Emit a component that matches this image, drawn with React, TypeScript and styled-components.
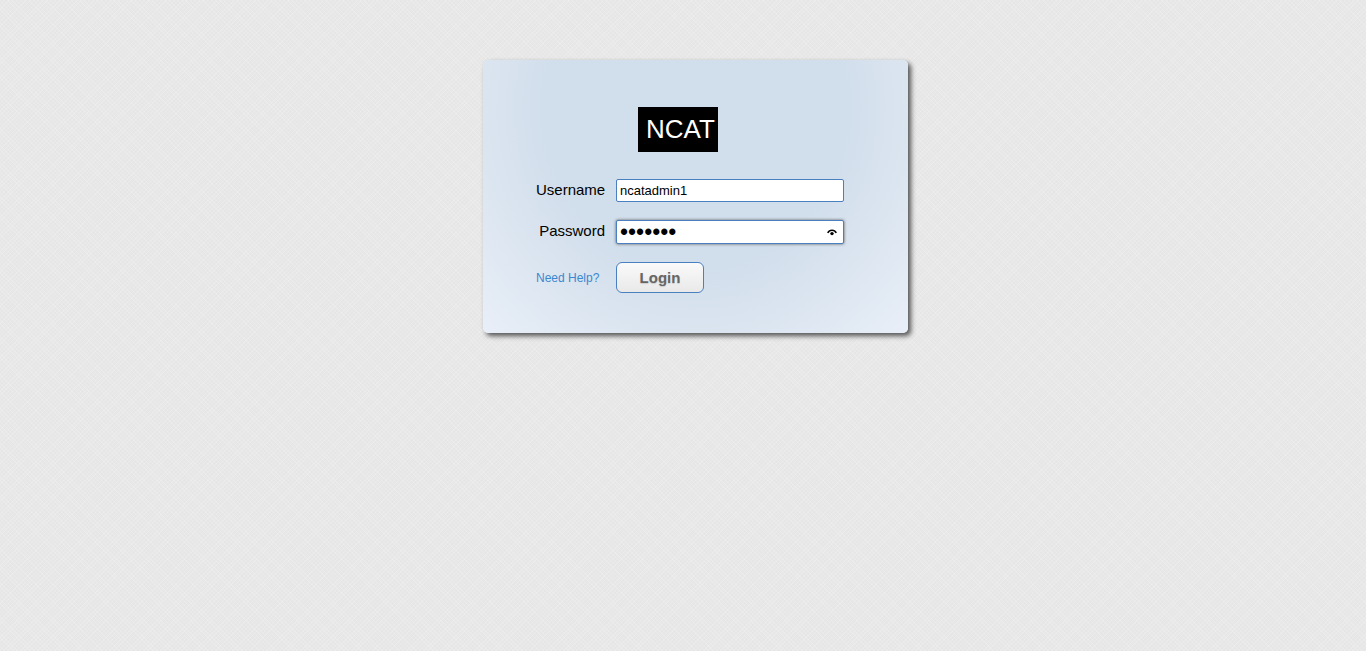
import React, { useState } from "react";
import styled, { createGlobalStyle } from "styled-components";

const GlobalStyle = createGlobalStyle`
  * { box-sizing: border-box; }
  body {
    margin: 0;
    min-height: 100vh;
    font-family: "Liberation Sans", Arial, sans-serif;
    color: #000;
    background-color: #e6e6e6;
    background-image:
      repeating-linear-gradient(45deg, rgba(255, 255, 255, 0.14) 0 1px, transparent 1px 3px),
      repeating-linear-gradient(-45deg, rgba(255, 255, 255, 0.14) 0 1px, transparent 1px 3px);
  }
`;

const Page = styled.main`
  display: flex;
  justify-content: center;
  padding: 60px 0 60px 25px;
`;

const Card = styled.form`
  width: 425px;
  max-width: 100%;
  padding: 47px 53px 40px;
  border-radius: 5px;
  background: radial-gradient(ellipse at 50% 18%, #d1deeb 50%, #e9eff8 100%);
  box-shadow: 3px 3px 5px #555;
`;

const Logo = styled.h1`
  width: 80px;
  height: 45px;
  margin: 0 0 27px 102px;
  padding-left: 8px;
  background: #000;
  color: #fff;
  font-size: 26px;
  font-weight: 400;
  line-height: 45px;
`;

const Fields = styled.div`
  display: grid;
  grid-template-columns: 69px 228px;
  column-gap: 11px;
  row-gap: 18px;
  align-items: center;
`;

const Label = styled.label`
  padding-bottom: 2px;
  font-size: 15px;
  line-height: 20px;
  text-align: right;
`;

const InputFrame = styled.div<{ $active?: boolean }>`
  display: flex;
  align-items: center;
  height: ${(p) => (p.$active ? 24 : 23)}px;
  padding: 0 4px 0 3px;
  border: 1px solid #4a80c0;
  border-radius: 2px;
  background: #fff;
  box-shadow: ${(p) => (p.$active ? "0 0 3px #555" : "none")};
`;

const TextInput = styled.input`
  flex: 1;
  min-width: 0;
  height: 20px;
  padding: 0;
  border: 0;
  outline: 0;
  background: transparent;
  color: #000;
  font-family: "Liberation Sans", Arial, sans-serif;
  font-size: 13px;
  &[type="password"] {
    font-size: 23px;
  }
`;

const RevealButton = styled.button`
  display: flex;
  width: 15px;
  height: 20px;
  padding: 0;
  border: 0;
  background: transparent;
  align-items: center;
  justify-content: center;
`;

const HelpLink = styled.a`
  color: #3c87d0;
  font-size: 12px;
  line-height: 16px;
  text-decoration: none;
`;

const LoginButton = styled.button`
  width: 88px;
  height: 31px;
  padding: 0;
  border: 1px solid #4a80c0;
  border-radius: 6px;
  background: linear-gradient(#fafafa, #e9e9e9);
  color: #666;
  font-family: "Liberation Sans", Arial, sans-serif;
  font-size: 15px;
  font-weight: 700;
  text-shadow: 0 1px 1px #ccc;
`;

function EyeIcon() {
  return (
    <svg width="10" height="7" viewBox="0 0 10 7" aria-hidden="true">
      <path d="M0.7 3.8C2.6 0.4 7.4 0.4 9.3 3.8" fill="none" stroke="#000" strokeWidth="1.6" />
      <circle cx="5" cy="4.6" r="1.7" />
    </svg>
  );
}

export default function App() {
  const [username, setUsername] = useState("ncatadmin1");
  const [password, setPassword] = useState("ncat123");
  const [revealed, setRevealed] = useState(false);

  return (
    <>
      <GlobalStyle />
      <Page>
        <Card onSubmit={(e) => e.preventDefault()}>
          <Logo>NCAT</Logo>
          <Fields>
            <Label htmlFor="username">Username</Label>
            <InputFrame>
              <TextInput id="username" value={username} onChange={(e) => setUsername(e.target.value)} />
            </InputFrame>
            <Label htmlFor="password">Password</Label>
            <InputFrame $active>
              <TextInput
                id="password"
                type={revealed ? "text" : "password"}
                value={password}
                onChange={(e) => setPassword(e.target.value)}
              />
              <RevealButton type="button" aria-label="Show password" onClick={() => setRevealed(!revealed)}>
                <EyeIcon />
              </RevealButton>
            </InputFrame>
            <HelpLink href="#help">Need Help?</HelpLink>
            <LoginButton type="submit">Login</LoginButton>
          </Fields>
        </Card>
      </Page>
    </>
  );
}
